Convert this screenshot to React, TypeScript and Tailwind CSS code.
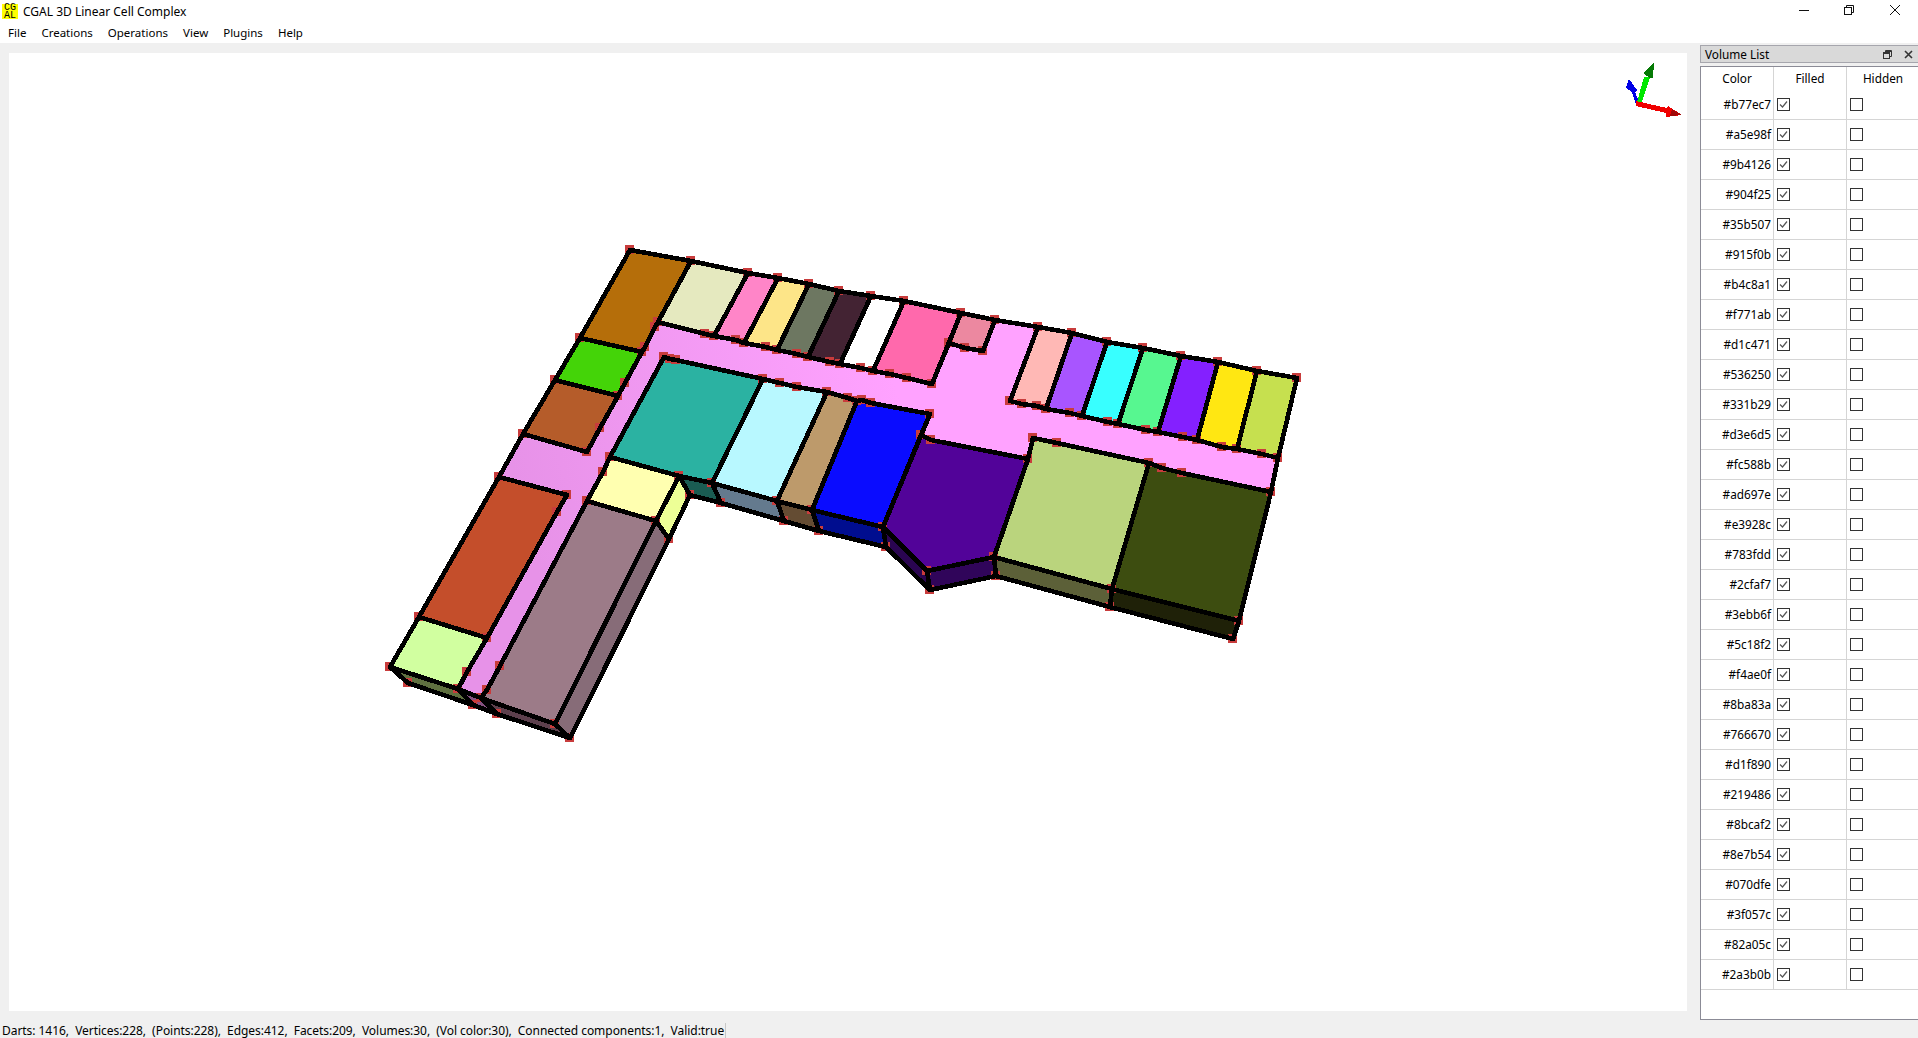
const volumeColors = [
  "#b77ec7", "#a5e98f", "#9b4126", "#904f25", "#35b507", "#915f0b",
  "#b4c8a1", "#f771ab", "#d1c471", "#536250", "#331b29", "#d3e6d5",
  "#fc588b", "#ad697e", "#e3928c", "#783fdd", "#2cfaf7", "#3ebb6f",
  "#5c18f2", "#f4ae0f", "#8ba83a", "#766670", "#d1f890", "#219486",
  "#8bcaf2", "#8e7b54", "#070dfe", "#3f057c", "#82a05c", "#2a3b0b",
];

const menus = ["File", "Creations", "Operations", "View", "Plugins", "Help"];

const corridor =
  "658,322 705,334 714,336 736,340 744,343 766,347 777,350 797,354 808,357 830,362 840,364 861,368 873,371 890,374 907,378 932,384 949,343 965,348 983,351 995,320 1038,327 1010,401 1022,404 1037,406 1046,409 1070,413 1082,416 1108,422 1118,424 1146,430 1158,432 1183,437 1197,440 1222,447 1237,449 1262,454 1278,458 1271,492 1182,473 1162,468 1149,463 1057,443 1033,438 1028,459 931,440 921,435 930,414 871,403 862,400 857,401 848,398 827,392 797,387 780,383 763,379 676,360 670,359 664,357 610,457 603,472 587,501 500,666 487,690 481,698 458,689 467,672 487,638 557,512 567,495 499,477 523,434 587,452 600,428 618,396 625,383 642,352 645,347 655,327";

// faces in draw order: sides and undersides first
const faces: { points: string; fill: string }[] = [
  { points: "390,667 458,689 473,705 408,683", fill: "#5f7040" },
  { points: "458,689 481,698 497,714 473,705", fill: "#84507f" },
  { points: "481,698 555,724 570,738 497,714", fill: "#5d404d" },
  { points: "656,521 669,539 570,738 555,724", fill: "#876c78" },
  { points: "679,476 690,495 669,539 656,521", fill: "#edff96" },
  { points: "679,476 712,483 721,503 690,495", fill: "#1a5c52" },
  { points: "712,483 777,501 784,521 721,503", fill: "#647a8e" },
  { points: "777,501 812,510 819,531 784,521", fill: "#644c33" },
  { points: "812,510 883,527 886,547 819,531", fill: "#000d8f" },
  { points: "883,527 927,571 930,590 886,547", fill: "#2a0550" },
  { points: "927,571 994,557 996,576 930,590", fill: "#30055a" },
  { points: "994,557 1112,589 1110,607 996,576", fill: "#5c6038" },
  { points: "1112,589 1239,621 1233,639 1110,607", fill: "#1f2108" },
  { points: "630,250 691,261 658,322 655,327 645,347 642,352 580,338", fill: "#b56e0a" },
  { points: "691,261 748,273 714,336 705,334 658,322", fill: "#e5e9bf" },
  { points: "748,273 778,278 744,343 736,340 714,336", fill: "#ff85c8" },
  { points: "778,278 809,284 777,350 766,347 744,343", fill: "#fde588" },
  { points: "809,284 839,291 808,357 797,354 777,350", fill: "#6d7761" },
  { points: "839,291 871,296 840,364 830,362 808,357", fill: "#432333" },
  { points: "871,296 904,301 873,371 861,368 840,364", fill: "#ffffff" },
  { points: "904,301 961,313 932,384 907,378 890,374 873,371", fill: "#ff69ac" },
  { points: "961,313 995,320 983,351 965,348 949,343", fill: "#ec88a0" },
  { points: "1038,327 1072,333 1046,409 1037,406 1022,404 1010,401", fill: "#ffb8b5" },
  { points: "1072,333 1107,342 1082,416 1070,413 1046,409", fill: "#a855ff" },
  { points: "1107,342 1143,348 1118,424 1108,422 1082,416", fill: "#38ffff" },
  { points: "1143,348 1181,356 1158,432 1146,430 1118,424", fill: "#57f790" },
  { points: "1181,356 1218,362 1197,440 1183,437 1158,432", fill: "#8420ff" },
  { points: "1218,362 1257,371 1237,449 1222,447 1197,440", fill: "#ffe712" },
  { points: "1257,371 1297,378 1278,458 1262,454 1237,449", fill: "#c6e04f" },
  { points: "580,338 642,352 625,383 618,396 555,380", fill: "#44d408" },
  { points: "555,380 618,396 600,428 587,452 523,434", fill: "#b55c2a" },
  { points: corridor, fill: "url(#corridor)" },
  { points: "499,477 567,495 557,512 487,638 419,617", fill: "#c44e2b" },
  { points: "419,617 487,638 467,672 458,689 390,667", fill: "#d1ffa0" },
  { points: "587,501 603,472 610,457 679,476 656,521", fill: "#ffffb0" },
  { points: "587,501 656,521 555,724 481,698 487,690 500,666", fill: "#9c7b88" },
  { points: "664,357 670,359 676,360 763,379 712,483 679,476 610,457", fill: "#2bb2a2" },
  { points: "763,379 780,383 797,387 827,392 777,501 712,483", fill: "#b8f8ff" },
  { points: "827,392 848,398 857,401 812,510 777,501", fill: "#bd9a6b" },
  { points: "857,401 862,400 871,403 930,414 883,527 812,510", fill: "#0a0cff" },
  { points: "921,435 931,440 1028,459 994,557 927,571 883,527", fill: "#520399" },
  { points: "1033,438 1057,443 1149,463 1112,589 994,557 1028,459", fill: "#bad47d" },
  { points: "1149,463 1162,468 1182,473 1271,492 1239,621 1112,589", fill: "#3d4d10" },
];

const vertices = Array.from(
  new Set(faces.flatMap((f) => f.points.split(" "))),
).map((p) => p.split(",").map(Number));

function ModelView() {
  return (
    <svg viewBox="9 53 1678 958" className="block h-full w-full">
      <defs>
        <linearGradient id="corridor" gradientUnits="userSpaceOnUse" x1="520" y1="500" x2="900" y2="400">
          <stop offset="0" stopColor="#e792e8" />
          <stop offset="1" stopColor="#ffa2ff" />
        </linearGradient>
      </defs>
      {faces.map((f, i) => (
        <polygon key={i} points={f.points} fill={f.fill} shapeRendering="crispEdges" />
      ))}
      {/* vertices go under the edges, so only their corners show */}
      {vertices.map(([x, y], i) => (
        <rect key={i} x={x - 5} y={y - 5} width="9" height="9" fill="#c83c3c" shapeRendering="crispEdges" />
      ))}
      {faces.map((f, i) => (
        <polygon key={i} points={f.points} fill="none" stroke="#000" strokeWidth="4.6" strokeLinejoin="round" shapeRendering="crispEdges" />
      ))}
      {/* axis gizmo */}
      <path d="M1636 104 L1632 92 L1626 88 L1629 79 L1637 90 L1635 92 L1639 102 Z" fill="#0000e6" shapeRendering="crispEdges" />
      <path d="M1637 102 L1644 77 L1650 77 L1642 102 Z" fill="#00e800" shapeRendering="crispEdges" />
      <path d="M1643 73 L1654 62 L1653 78 L1650 78 Z" fill="#067a06" shapeRendering="crispEdges" />
      <path d="M1636 101 L1667 108 L1668 106 L1682 115 L1666 117 L1666 113 L1636 106 Z" fill="#f00000" shapeRendering="crispEdges" />
      <path d="M1672 109 L1682 115 L1670 116 Z" fill="#a00808" shapeRendering="crispEdges" />
    </svg>
  );
}

function CheckBox({ checked }: { checked: boolean }) {
  return (
    <span className="flex h-[13px] w-[13px] items-center justify-center border border-[#333333] bg-white">
      {checked && (
        <svg width="11" height="11" viewBox="0 0 11 11" fill="none">
          <path d="M2 5.5 L4.5 8 L9 2.5" stroke="#555555" strokeWidth="1.2" />
        </svg>
      )}
    </span>
  );
}

function VolumeList() {
  return (
    <div className="mt-[2px] ml-[13px] flex h-[975px] w-[218px] flex-col text-[11.8px]">
      <div className="flex h-[18px] items-center justify-between border border-r-0 border-[#a6a6ad] bg-[#d9d9d9] pr-[5px] pl-[4px]">
        <span className="pt-[2px]">Volume List</span>
        <div className="flex items-center gap-[12px]">
          <svg width="9" height="9" viewBox="0 0 9 9" fill="none" stroke="#333" strokeWidth="1">
            <rect x="0.5" y="2.5" width="6" height="6" />
            <path d="M2.5 2.5 V0.5 H8.5 V6.5 H6.5 M2.5 1.5 H8.5 M0.5 3.5 H6.5" />
          </svg>
          <svg width="9" height="9" viewBox="0 0 9 9" fill="none" stroke="#333" strokeWidth="1.6">
            <path d="M1 1 L8 8 M8 1 L1 8" />
          </svg>
        </div>
      </div>
      <div className="mt-[3px] flex flex-1 flex-col border-t border-b border-l border-[#8b8b96] bg-white">
        <div className="grid h-[23px] shrink-0 grid-cols-[73px_73px_72px] items-center text-center">
          <span className="h-full border-r border-[#d5d5d5] leading-[22px]">Color</span>
          <span className="h-full border-r border-[#d5d5d5] leading-[22px]">Filled</span>
          <span className="h-full leading-[22px]">Hidden</span>
        </div>
        {volumeColors.map((color) => (
          <div key={color} className="grid h-[30px] shrink-0 grid-cols-[73px_73px_72px] border-b border-[#d5d5d5]">
            <span className="flex items-center justify-end border-r border-[#d5d5d5] pr-[2px]">{color}</span>
            <span className="flex items-center border-r border-[#d5d5d5] pl-[3px]">
              <CheckBox checked />
            </span>
            <span className="flex items-center pl-[3px]">
              <CheckBox checked={false} />
            </span>
          </div>
        ))}
      </div>
    </div>
  );
}

export default function App() {
  return (
    <div className="flex h-[1038px] w-[1918px] flex-col overflow-hidden bg-[#f0f0f0] font-['Noto_Sans',sans-serif] text-[12px] leading-none text-black">
      <div className="flex h-[26px] shrink-0 items-start bg-white pt-[4px] pl-[2px]">
        <div className="flex h-[15px] w-[16px] flex-col items-center justify-center bg-[#ffff00] font-['Liberation_Mono',monospace] text-[10px] leading-[7.5px]">
          <span>CG</span>
          <span>AL</span>
        </div>
        <span className="mt-[2px] ml-[5px]">CGAL 3D Linear Cell Complex</span>
        <div className="ml-auto flex items-center pt-[1px] pr-[18px]">
          <svg width="10" height="10" viewBox="0 0 10 10" stroke="#111" fill="none" className="mr-[35px]">
            <path d="M0 5.5 H10" />
          </svg>
          <svg width="10" height="10" viewBox="0 0 10 10" stroke="#111" fill="none" className="mr-[36px]">
            <rect x="0.5" y="2.5" width="7" height="7" />
            <path d="M2.5 2.5 V0.5 H9.5 V7.5 H7.5" />
          </svg>
          <svg width="10" height="10" viewBox="0 0 10 10" stroke="#111" fill="none">
            <path d="M0 0 L10 10 M10 0 L0 10" />
          </svg>
        </div>
      </div>
      <div className="flex h-[17px] shrink-0 items-start gap-[15px] bg-white pl-[8px] text-[11.5px]">
        {menus.map((m) => (
          <span key={m} className="leading-[14px]">{m}</span>
        ))}
      </div>
      <div className="flex h-[976px] shrink-0 items-start pl-[9px]">
        <div className="mt-[10px] h-[958px] w-[1678px] shrink-0 bg-white">
          <ModelView />
        </div>
        <VolumeList />
      </div>
      <div className="flex h-[19px] items-start pt-[4px] pl-[2px]">
        <span className="border-r border-[#c8c8c8] pr-[1px] leading-[15px] tracking-[-0.045px] whitespace-pre">
          Darts: 1416,  Vertices:228,  (Points:228),  Edges:412,  Facets:209,  Volumes:30,  (Vol color:30),  Connected components:1,  Valid:true
        </span>
      </div>
    </div>
  );
}
